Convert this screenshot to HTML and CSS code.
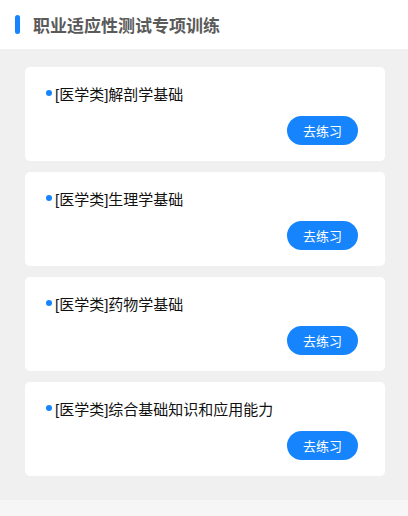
FILE: index.html
```html
<!DOCTYPE html>
<html lang="zh">
<head>
<meta charset="utf-8">
<link rel="stylesheet" href="styles.css">
</head>
<body>
<div class="page">
  <header class="head">
    <span class="head-bar"></span>
    <h1 class="head-title">职业适应性测试专项训练</h1>
  </header>
  <main class="list">
    <div class="card">
      <div class="card-title"><span class="dot"></span>[医学类]解剖学基础</div>
      <div class="card-foot"><button class="btn">去练习</button></div>
    </div>
    <div class="card">
      <div class="card-title"><span class="dot"></span>[医学类]生理学基础</div>
      <div class="card-foot"><button class="btn">去练习</button></div>
    </div>
    <div class="card">
      <div class="card-title"><span class="dot"></span>[医学类]药物学基础</div>
      <div class="card-foot"><button class="btn">去练习</button></div>
    </div>
    <div class="card">
      <div class="card-title"><span class="dot"></span>[医学类]综合基础知识和应用能力</div>
      <div class="card-foot"><button class="btn">去练习</button></div>
    </div>
  </main>
  <div class="bottom"></div>
</div>
</body>
</html>
```
FILE: styles.css
```css
html, body {
  margin: 0;
  padding: 0;
  background: #f6f6f6;
}
.page {
  width: 408px;
  font-family: "Liberation Sans", "Noto Sans CJK SC", sans-serif;
}
.head {
  height: 49px;
  background: #fff;
  display: flex;
  align-items: center;
  padding-left: 15px;
  box-sizing: border-box;
}
.head-bar {
  width: 5px;
  height: 19px;
  border-radius: 3px;
  background: #1684fc;
  margin-right: 13px;
}
.head-title {
  margin: 0;
  font-size: 17px;
  font-weight: bold;
  color: #5a5a5a;
  font-family: "Noto Sans CJK SC", sans-serif;
}
.list {
  background: #f0f0f0;
  padding: 18px 23px 24px 25px;
  display: flex;
  flex-direction: column;
  gap: 11px;
}
.card {
  background: #fff;
  border-radius: 5px;
  height: 94px;
  box-sizing: border-box;
  padding: 18px 27px 16px 21px;
  display: flex;
  flex-direction: column;
}
.card-title {
  display: flex;
  align-items: center;
  font-size: 15px;
  line-height: 20px;
  color: #111;
}
.dot {
  width: 6px;
  height: 6px;
  border-radius: 50%;
  background: #1684fc;
  margin-right: 3px;
  margin-top: -4px;
}
.card-foot {
  margin-top: auto;
  display: flex;
  justify-content: flex-end;
}
.btn {
  width: 71px;
  height: 29px;
  border: none;
  border-radius: 15px;
  background: #1684fc;
  color: #fff;
  font-size: 13px;
  font-family: "Noto Sans CJK SC", sans-serif;
  padding: 0;
}
.bottom {
  height: 16px;
  background: #f6f6f6;
}
```
